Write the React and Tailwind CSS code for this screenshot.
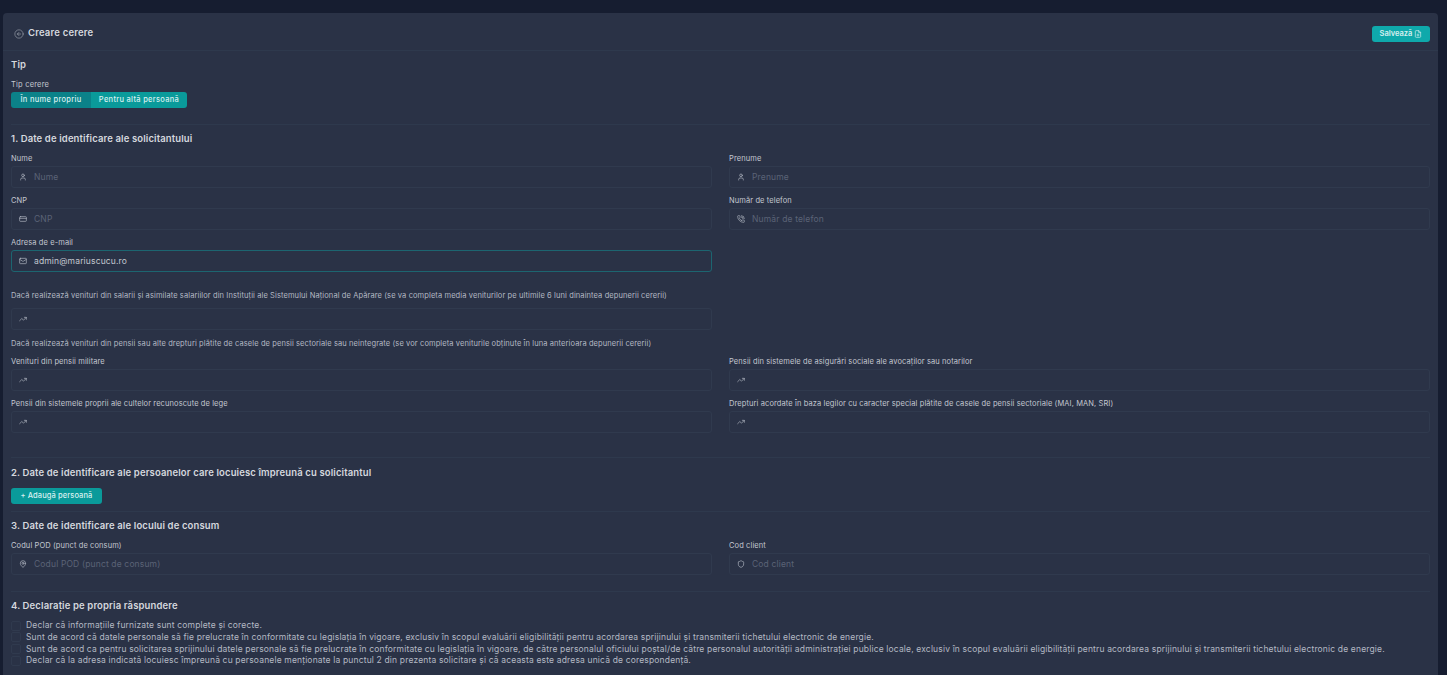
import React from "react";
import { ArrowLeftCircle, User, CreditCard, PhoneCall, Mail, TrendingUp, MapPin, Shield, FilePlus } from "lucide-react";

function Field({ label, icon: Icon, placeholder, value, focused, className = "" }) {
  return (
    <div className={className}>
      <div className="h-[14px] text-[7.5px] leading-[14px] tracking-[0.1px] text-[#c3c7d0] whitespace-nowrap">{label}</div>
      <div
        className={`flex h-[22px] items-center rounded-[3px] border pl-[7px] ${
          focused ? "border-[#1c6570]" : "border-[#303a4e]"
        }`}
      >
        <Icon size={8} strokeWidth={2} className="mr-[7px] shrink-0 text-[#b4b9c4]" />
        {value ? (
          <span className="text-[8.5px] tracking-[0.15px] text-[#c3c7d0]">{value}</span>
        ) : placeholder ? (
          <span className="text-[8.5px] tracking-[0.15px] text-[#5b6376]">{placeholder}</span>
        ) : null}
      </div>
    </div>
  );
}

function Title({ children, className = "" }) {
  return <h2 className={`text-[9.5px] font-semibold leading-[12px] tracking-[0.13px] text-[#d5d8de] ${className}`}>{children}</h2>;
}

const declarations = [
  "Declar că informațiile furnizate sunt complete și corecte.",
  "Sunt de acord că datele personale să fie prelucrate în conformitate cu legislația în vigoare, exclusiv în scopul evaluării eligibilității pentru acordarea sprijinului și transmiterii tichetului electronic de energie.",
  "Sunt de acord ca pentru solicitarea sprijinului datele personale să fie prelucrate în conformitate cu legislația în vigoare, de către personalul oficiului poștal/de către personalul autorității administrației publice locale, exclusiv în scopul evaluării eligibilității pentru acordarea sprijinului și transmiterii tichetului electronic de energie.",
  "Declar că la adresa indicată locuiesc împreună cu persoanele menționate la punctul 2 din prezenta solicitare și că aceasta este adresa unică de corespondență.",
];

export default function App() {
  return (
    <div className="h-[675px] overflow-hidden bg-[#161d30] pl-[3px] pr-[9px] pt-[13px] font-['Inter',sans-serif]">
      <div className="h-[700px] rounded-t-[4px] bg-[#2a3246]">
        <header className="flex h-[38px] items-center justify-between border-b border-[#2e394d] pl-[11px] pr-[8px] pt-[4px]">
          <div className="flex items-center gap-[4px]">
            <ArrowLeftCircle size={10} strokeWidth={1.25} className="text-[#b4b9c4]" />
            <span className="text-[9.5px] font-semibold tracking-[0.2px] text-[#d5d8de]">Creare cerere</span>
          </div>
          <button className="flex h-[16px] w-[58px] items-center justify-center gap-[2px] rounded-[3px] bg-[#0fa9ab] text-[7.5px] font-semibold text-[#d8f0f0]">
            Salvează <FilePlus size={8} />
          </button>
        </header>

        <div className="px-[8px]">
          <section className="border-b border-[#2e394d] pb-[16px] pt-[8px]">
            <Title>Tip</Title>
            <div className="mt-[9px] text-[7.5px] leading-[10px] tracking-[0.2px] text-[#c3c7d0]">Tip cerere</div>
            <div className="mt-[2px] flex h-[16px] w-[176px] overflow-hidden rounded-[3px] text-[7.5px] font-medium tracking-[0.3px] text-[#d8f0f0]">
              <div className="flex w-[80px] items-center justify-center bg-[#0b8289]">În nume propriu</div>
              <div className="flex flex-1 items-center justify-center bg-[#0a9a9a]">Pentru altă persoană</div>
            </div>
          </section>

          <section className="border-b border-[#2e394d] pb-[24px] pt-[8px]">
            <Title>1. Date de identificare ale solicitantului</Title>
            <div className="mt-[7px] grid grid-cols-2 gap-x-[17px] gap-y-[6px]">
              <Field label="Nume" icon={User} placeholder="Nume" />
              <Field label="Prenume" icon={User} placeholder="Prenume" />
              <Field label="CNP" icon={CreditCard} placeholder="CNP" />
              <Field label="Număr de telefon" icon={PhoneCall} placeholder="Număr de telefon" />
              <Field label="Adresa de e-mail" icon={Mail} value="admin@mariuscucu.ro" focused />
            </div>
            <div className="mt-[19px] text-[7.5px] leading-[10px] tracking-[0.1px] text-[#b4b9c4]">
              Dacă realizează venituri din salarii și asimilate salariilor din Instituții ale Sistemului Național de Apărare (se va completa media veniturilor pe ultimile 6 luni dinaintea depunerii cererii)
            </div>
            <div className="mt-[7px] grid grid-cols-2 gap-x-[17px]">
              <div className="flex h-[22px] items-center rounded-[3px] border border-[#303a4e] pl-[7px]">
                <TrendingUp size={8} strokeWidth={2} className="text-[#b4b9c4]" />
              </div>
            </div>
            <div className="mt-[9px] text-[7.5px] leading-[10px] tracking-[0.1px] text-[#b4b9c4]">
              Dacă realizează venituri din pensii sau alte drepturi plătite de casele de pensii sectoriale sau neintegrate (se vor completa veniturile obținute în luna anterioara depunerii cererii)
            </div>
            <div className="mt-[6px] grid grid-cols-2 gap-x-[17px] gap-y-[6px]">
              <Field label="Venituri din pensii militare" icon={TrendingUp} />
              <Field label="Pensii din sistemele de asigurări sociale ale avocaților sau notarilor" icon={TrendingUp} />
              <Field label="Pensii din sistemele proprii ale cultelor recunoscute de lege" icon={TrendingUp} />
              <Field label="Drepturi acordate în baza legilor cu caracter special plătite de casele de pensii sectoriale (MAI, MAN, SRI)" icon={TrendingUp} />
            </div>
          </section>

          <section className="border-b border-[#2e394d] pb-[7px] pt-[9px]">
            <Title>2. Date de identificare ale persoanelor care locuiesc împreună cu solicitantul</Title>
            <button className="mt-[9px] flex h-[16px] w-[91px] items-center justify-center gap-[3px] rounded-[3px] bg-[#0a9a9a] text-[7.5px] font-medium tracking-[0.1px] text-[#d8f0f0]">
              + Adaugă persoană
            </button>
          </section>

          <section className="border-b border-[#2e394d] pb-[16px] pt-[8px]">
            <Title>3. Date de identificare ale locului de consum</Title>
            <div className="mt-[7px] grid grid-cols-2 gap-x-[17px]">
              <Field label="Codul POD (punct de consum)" icon={MapPin} placeholder="Codul POD (punct de consum)" />
              <Field label="Cod client" icon={Shield} placeholder="Cod client" />
            </div>
          </section>

          <section className="pt-[8px]">
            <Title>4. Declarație pe propria răspundere</Title>
            <ul className="mt-[8px] flex flex-col">
              {declarations.map((text) => (
                <li key={text} className="flex h-[11.6px] items-center gap-[5px]">
                  <span className="h-[10px] w-[10px] shrink-0 rounded-[2px] border border-[#303a4e]" />
                  <span className="whitespace-nowrap text-[8.5px] tracking-[0.16px] text-[#b4b9c4]">{text}</span>
                </li>
              ))}
            </ul>
          </section>
        </div>
      </div>
    </div>
  );
}
